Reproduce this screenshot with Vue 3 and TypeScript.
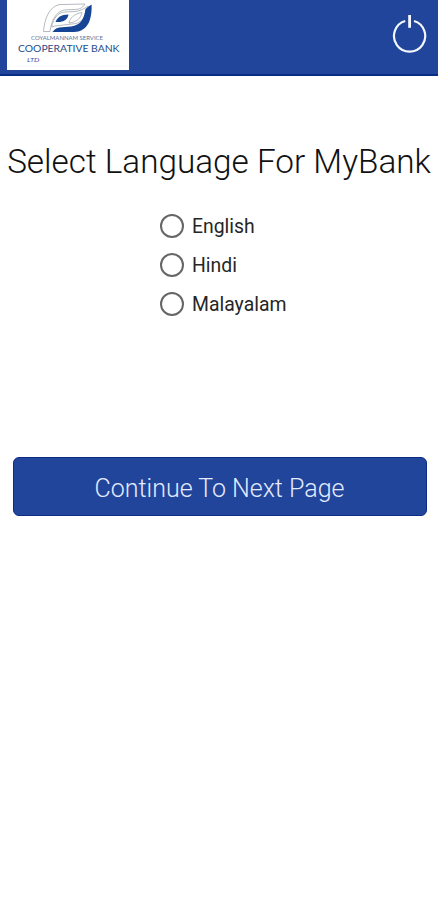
<script setup lang="ts">
import { ref } from 'vue'

const languages: string[] = ['English', 'Hindi', 'Malayalam']
const selected = ref<string>('')
</script>

<template>
  <div class="screen">
    <header class="bar">
      <svg class="logo" viewBox="0 0 122 70" role="img" aria-label="Cooperative Bank">
        <path class="outline" d="M36.5 31.5 C37.5 19 42 7 52 4.6 L78 4 C75 9 71 9.5 66 9.5 L57 10 C49 12 44.5 20 43 31.5 Z" />
        <path class="outline" d="M44.5 27 C46.5 18 51 12.5 58 12 L68 11.5 C73 11 77 9 81 6 C81 14 77 21 69 23.5 L48 26 Z" />
        <path class="outline" d="M62 23 C63 18 67 14 75 12.5 C74 18 70 22 62 23 Z" />
        <path class="fill" d="M84.6 4.5 C85 16 83 31.5 67 32 L45.5 32 C48 28.5 51 27.5 55 27.3 L64 26.4 C74 25 77 19 78.5 9 C80.5 7 82.5 6 84.6 4.5 Z" />
        <path class="fill" d="M48.5 22 C50 17.5 54 14.5 61.5 14.5 C60.5 19.5 57 22.5 48.5 22 Z" />
        <text class="service" x="24" y="39.5" textLength="72" lengthAdjust="spacingAndGlyphs">COYALMANNAM SERVICE</text>
        <text class="name" x="11" y="51.5" textLength="101.5" lengthAdjust="spacingAndGlyphs">COOPERATIVE BANK</text>
        <text class="ltd" x="20" y="61.5" textLength="12.5" lengthAdjust="spacingAndGlyphs">LTD</text>
      </svg>
      <button class="power" type="button" aria-label="Exit">
        <svg viewBox="0 0 36 42">
          <path d="M13.2 8 A15.6 15.6 0 1 0 22 8" />
          <path class="stem" d="M17.6 2 V14.8" />
        </svg>
      </button>
    </header>

    <main class="content">
      <h1 class="title">Select Language For MyBank</h1>
      <div class="options" role="radiogroup">
        <label v-for="language in languages" :key="language" class="option">
          <input v-model="selected" class="radio" type="radio" name="language" :value="language" />
          <span class="label">{{ language }}</span>
        </label>
      </div>
      <button class="next" type="button"><span>Continue To Next Page</span></button>
    </main>
  </div>
</template>

<style>
body {
  background: #fff;
}
</style>

<style scoped>
.screen {
  box-sizing: border-box;
  min-height: 900px;
  background: #fff;
  font-family: Roboto, "Liberation Sans", sans-serif;
}
.bar {
  box-sizing: border-box;
  display: flex;
  justify-content: space-between;
  align-items: flex-start;
  height: 76px;
  padding: 0 10px 0 7px;
  background: #21459b;
  border-bottom: 2px solid #0b2b84;
}
.logo {
  display: block;
  width: 122px;
  height: 70px;
  background: #fff;
}
.outline {
  fill: #fff;
  stroke: #a3a8b0;
  stroke-width: 0.8;
}
.fill {
  fill: #174596;
}
.service,
.name,
.ltd {
  font-family: Lato, sans-serif;
}
.service {
  font-size: 5.6px;
  fill: #5d7294;
}
.name {
  font-size: 10px;
  font-weight: 400;
  fill: #244a87;
}
.ltd {
  font-size: 6px;
  font-style: italic;
  fill: #5252a8;
}
.power {
  width: 36px;
  height: 42px;
  margin-top: 13px;
  padding: 0;
  border: 0;
  background: none;
}
.power svg {
  display: block;
  width: 36px;
  height: 42px;
  fill: none;
  stroke: #f4f7ff;
  stroke-width: 2.2;
}
.power .stem {
  stroke-width: 2.8;
}
.content {
  display: flex;
  flex-direction: column;
  align-items: center;
}
.title {
  margin: 64px 0 0;
  font-size: 33.3px;
  line-height: 44px;
  font-weight: 300;
  color: #111;
  white-space: nowrap;
}
.options {
  display: flex;
  flex-direction: column;
  width: 126px;
  margin: 22px 0 0 8px;
}
.option {
  display: flex;
  align-items: center;
  gap: 8px;
  height: 39px;
}
.radio {
  appearance: none;
  box-sizing: border-box;
  flex: none;
  width: 24px;
  height: 24px;
  margin: 0;
  border: 2px solid #666;
  border-radius: 50%;
}
.radio:checked {
  box-shadow: inset 0 0 0 4px #fff;
  background: #21459b;
}
.label {
  padding-top: 2px;
  font-size: 19.4px;
  line-height: 24px;
  color: #262626;
  white-space: nowrap;
}
.next {
  box-sizing: border-box;
  width: 414px;
  height: 59px;
  margin: 134px 0 0 1px;
  padding: 4px 0 0;
  border: 1px solid #0b2b84;
  border-radius: 6px;
  background: #21459b;
  color: #e3ebff;
  font-family: inherit;
  font-size: 25px;
  font-weight: 300;
  line-height: 32px;
}
</style>
